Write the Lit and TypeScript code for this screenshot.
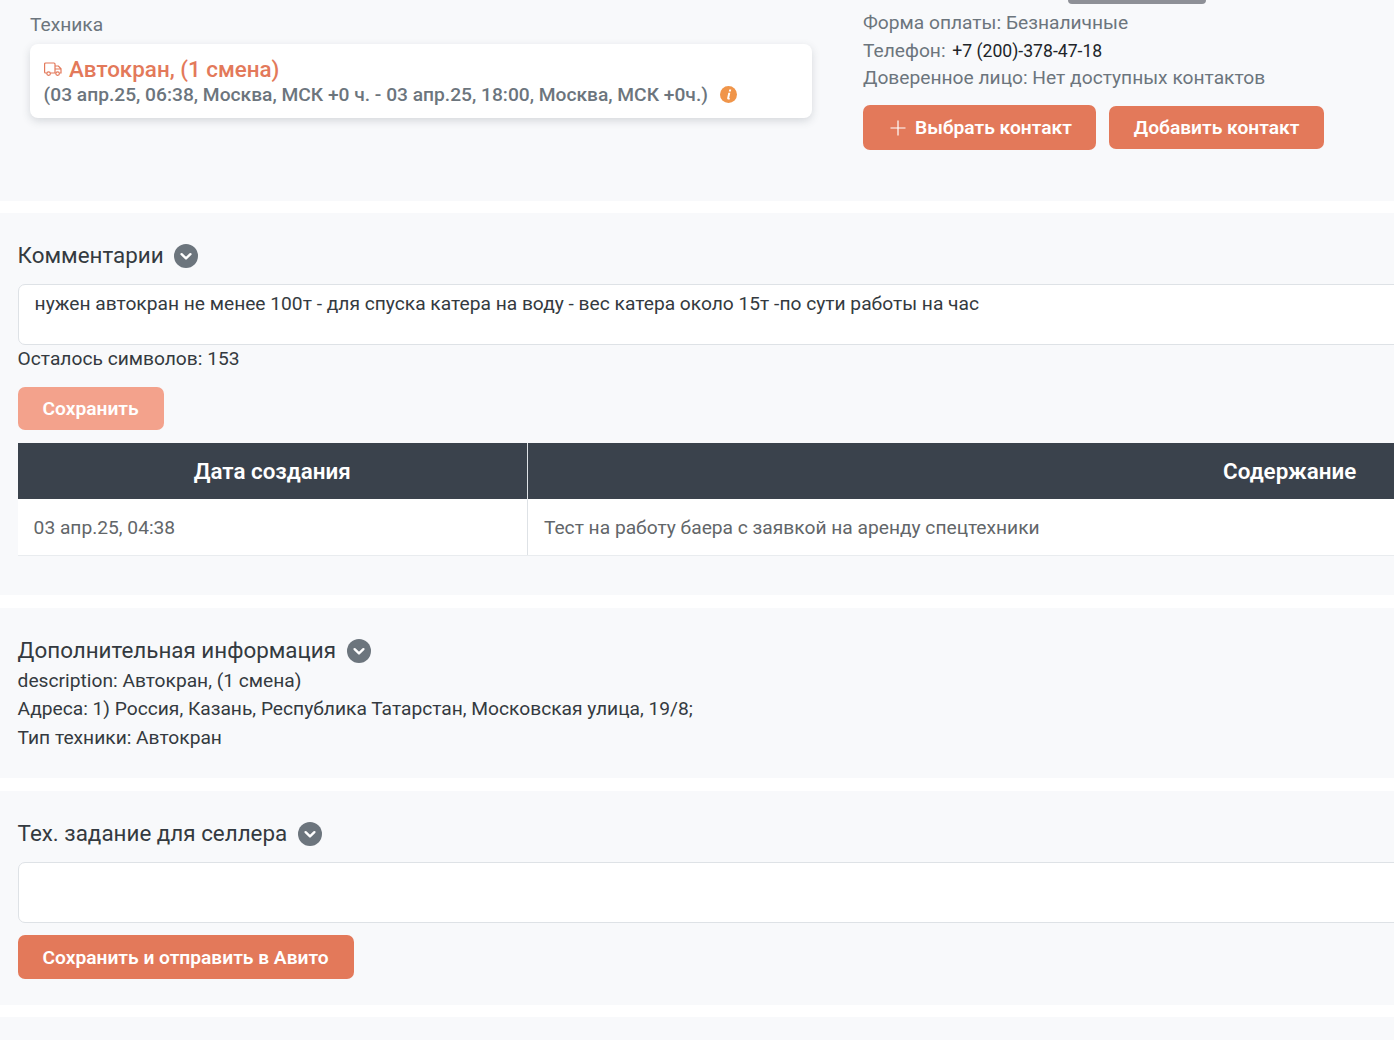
import { LitElement, html, css } from "lit";
import { customElement } from "lit/decorators.js";

const chevron = html`<svg class="chev" viewBox="0 0 24 24" width="24" height="24" aria-hidden="true">
  <circle cx="12" cy="12" r="12" fill="#6c757d"></circle>
  <path d="M7.6 10.2 12 14.4 16.4 10.2" fill="none" stroke="#fff" stroke-width="2.4" stroke-linecap="round" stroke-linejoin="round"></path>
</svg>`;

@customElement("app-root")
export class AppRoot extends LitElement {
  static styles = css`
    :host { display: block; width: 1394px; height: 1040px; overflow: hidden; background: #fff; font-family: Roboto, "Liberation Sans", sans-serif; font-size: 19.2px; color: #343a40; }
    * { box-sizing: border-box; }
    .section { background: #f8f9fb; padding-left: 18px; width: 2100px; }
    .s1 { height: 201px; padding-left: 30px; display: flex; margin-bottom: 12px; }
    .s2 { height: 382px; padding-top: 27px; margin-bottom: 13px; }
    .s3 { height: 170px; padding-top: 27px; margin-bottom: 13px; }
    .s4 { height: 214px; padding-top: 27px; margin-bottom: 12px; }
    .s5 { height: 30px; }
    .left { width: 782px; flex: none; padding-top: 13px; }
    .tech-label { line-height: 23px; color: #6c757d; }
    .card { margin-top: 8px; height: 74px; background: #fff; border-radius: 8px; box-shadow: 0 3px 8px rgba(60, 70, 85, .18); padding: 12px 14px; }
    .card-title { display: flex; align-items: center; gap: 7px; font-size: 22.4px; font-weight: 500; line-height: 26px; color: #e3795a; }
    .card-sub { display: flex; align-items: center; gap: 12px; margin-left: -0.4px; font-weight: 500; line-height: 25px; color: #6c757d; }
    .right { margin-left: 51px; width: 500px; color: #6c757d; }
    .sliver { width: 138px; height: 4px; margin-left: 205px; margin-bottom: 5.3px; background: #8e9097; border-radius: 0 0 6px 6px; }
    .right .line { line-height: 27.4px; }
    .dark { color: #212529; font-size: 17.6px; line-height: 1; margin-left: 2px; }
    .btns { display: flex; align-items: center; gap: 13px; margin-top: 13.5px; }
    .btn { display: inline-flex; align-items: center; justify-content: center; background: #e3795a; color: #fff; font-weight: 600; font-size: 19.2px; line-height: 23px; border-radius: 7px; padding: 10px 25.5px 10px 24.5px; }
    .btns .btn:last-child { padding-right: 24.5px; }
    .btn.tall { padding: 11px 24.5px 11px 26.5px; gap: 9.5px; }
    .btn.off { background: #f3a28c; }
    .head { display: flex; align-items: center; gap: 10.5px; margin-left: -0.4px; font-size: 22.4px; line-height: 30px; color: #343a40; }
    .chev { flex: none; margin-top: 2px; }
    .box { display: block; width: 1500px; height: 61px; margin-top: 14px; background: #fff; border: 1px solid #dee2e6; border-radius: 7px; padding: 6px 15.6px; line-height: 26px; color: #343a40; }
    .count { line-height: 26px; margin-top: 1px; margin-left: -0.4px; }
    .s2 .btn { margin-top: 15px; }
    table { border-collapse: collapse; width: 2034px; margin-top: 13px; table-layout: fixed; }
    th { height: 56px; background: #3a424c; color: #fff; font-size: 22.4px; font-weight: 600; text-align: center; padding: 0; }
    th:first-child, td:first-child { width: 509px; border-right: 1px solid #dee2e6; }
    td { height: 56px; background: #fff; color: #626669; padding: 2px 16px 0 15.6px; border-bottom: 1px solid #e9ecef; }
    td + td { padding-left: 16.4px; }
    .info { line-height: 28.8px; margin-left: -0.4px; }
    .s3 .head { margin-bottom: 1.5px; }
    .s4 .btn { margin-top: 12px; padding-top: 10.5px; padding-bottom: 10.5px; }
  `;

  render() {
    return html`
      <div class="section s1">
        <div class="left">
          <div class="tech-label">Техника</div>
          <div class="card">
            <div class="card-title">
              <svg width="18" height="14" viewBox="0 0 18 14" fill="none" stroke="#e3795a" stroke-width="1.2" aria-hidden="true">
                <path d="M2.6 11H1.6a1 1 0 0 1-1-1V2a1 1 0 0 1 1-1h8.4a1 1 0 0 1 1 1v9H6.6M11 4h3.4l2.6 2.8V11h-1M11 7h6M11 11h.4"></path>
                <circle cx="4.6" cy="11.6" r="1.8"></circle><circle cx="13.6" cy="11.6" r="1.8"></circle>
              </svg>
              <span>Автокран, (1 смена)</span>
            </div>
            <div class="card-sub">
              <span>(03 апр.25, 06:38, Москва, МСК +0 ч. - 03 апр.25, 18:00, Москва, МСК +0ч.)</span>
              <svg width="17" height="17" viewBox="0 0 17 17" aria-hidden="true">
                <circle cx="8.5" cy="8.5" r="8.5" fill="#f0954a"></circle>
                <path d="M9.2 3.4h2l-.4 2h-2zM8.3 6.8h2l-1.1 5.2c-.1.4.3.5.9.3l-.2 1c-1.6.6-3 .2-2.7-1.2z" fill="#fff"></path>
              </svg>
            </div>
          </div>
        </div>
        <div class="right">
          <div class="sliver"></div>
          <div class="line">Форма оплаты: Безналичные</div>
          <div class="line">Телефон: <span class="dark">+7 (200)-378-47-18</span></div>
          <div class="line">Доверенное лицо: Нет доступных контактов</div>
          <div class="btns">
            <span class="btn tall">
              <svg width="16" height="16" viewBox="0 0 16 16" aria-hidden="true"><path d="M8 .5v15M.5 8h15" stroke="#fff" stroke-width="1.2" fill="none"></path></svg>
              Выбрать контакт
            </span>
            <span class="btn">Добавить контакт</span>
          </div>
        </div>
      </div>

      <div class="section s2">
        <div class="head">Комментарии ${chevron}</div>
        <div class="box">нужен автокран не менее 100т - для спуска катера на воду - вес катера около 15т -по сути работы на час</div>
        <div class="count">Осталось символов: 153</div>
        <span class="btn off">Сохранить</span>
        <table>
          <thead><tr><th>Дата создания</th><th>Содержание</th></tr></thead>
          <tbody><tr><td>03 апр.25, 04:38</td><td>Тест на работу баера с заявкой на аренду спецтехники</td></tr></tbody>
        </table>
      </div>

      <div class="section s3">
        <div class="head">Дополнительная информация ${chevron}</div>
        <div class="info">description: Автокран, (1 смена)</div>
        <div class="info">Адреса: 1) Россия, Казань, Республика Татарстан, Московская улица, 19/8;</div>
        <div class="info">Тип техники: Автокран</div>
      </div>

      <div class="section s4">
        <div class="head">Тех. задание для селлера ${chevron}</div>
        <div class="box"></div>
        <span class="btn">Сохранить и отправить в Авито</span>
      </div>

      <div class="section s5"></div>
    `;
  }
}
